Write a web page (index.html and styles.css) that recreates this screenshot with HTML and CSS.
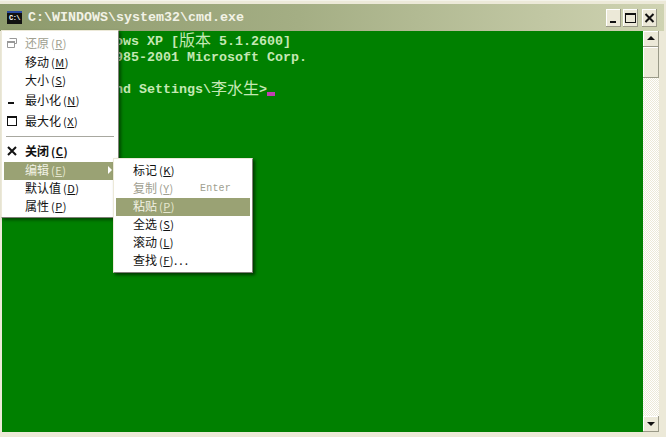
FILE: index.html
```html
<!DOCTYPE html>
<html lang="zh-CN">
<head>
<meta charset="utf-8">
<title>cmd.exe</title>
<link rel="stylesheet" href="styles.css">
</head>
<body>
<div class="window">
  <header class="titlebar">
    <div class="app-icon"><span class="app-icon-text">C:\</span></div>
    <div class="title">C:\WINDOWS\system32\cmd.exe</div>
    <div class="controls">
      <div class="ctl"><svg width="15" height="18" viewBox="0 0 15 18"><rect x="4" y="12" width="6" height="2" fill="#111"/></svg></div>
      <div class="ctl"><svg width="15" height="18" viewBox="0 0 15 18"><rect x="2.5" y="4.5" width="10" height="9" fill="none" stroke="#111"/><rect x="2" y="4" width="11" height="2" fill="#111"/></svg></div>
      <div class="ctl ctl-close"><svg width="15" height="18" viewBox="0 0 15 18"><path d="M3.5 5l8 8M11.5 5l-8 8" stroke="#111" stroke-width="2" fill="none"/></svg></div>
    </div>
  </header>
  <main class="client">
    <div class="console">
      <div class="line">Microsoft Windows XP [<span class="cjk">版本</span> 5.1.2600]</div>
      <div class="line">(C) <span class="cjk">版权所有</span> 1985-2001 Microsoft Corp.</div>
      <div class="line">&nbsp;</div>
      <div class="line">C:\Documents and Settings\<span class="cjk">李水生</span>&gt;<span class="cursor"></span></div>
    </div>
    <div class="scrollbar">
      <div class="sb-btn"><svg width="16" height="16" viewBox="0 0 16 16"><path d="M8 5l4 4H4z" fill="#111"/></svg></div>
      <div class="sb-thumb"></div>
      <div class="sb-track"></div>
      <div class="sb-btn"><svg width="16" height="16" viewBox="0 0 16 16"><path d="M4 6h8l-4 4z" fill="#111"/></svg></div>
    </div>
  </main>

  <nav class="menu menu-system">
    <div class="item h19 disabled"><span class="gutter"><svg width="12" height="12" viewBox="0 0 12 12"><path d="M3.5 1.5h7v5h-2M1.5 4.5h7v6h-7z" fill="none" stroke="#999"/><path d="M1 4h8v2H1z" fill="#999"/></svg></span><span class="label">还原<span class="key">(<u>R</u>)</span></span></div>
    <div class="item h19"><span class="gutter"></span><span class="label">移动<span class="key">(<u>M</u>)</span></span></div>
    <div class="item h18"><span class="gutter"></span><span class="label">大小<span class="key">(<u>S</u>)</span></span></div>
    <div class="item h21"><span class="gutter"><svg width="12" height="12" viewBox="0 0 12 12"><rect x="2" y="8" width="6" height="2" fill="#111"/></svg></span><span class="label">最小化<span class="key">(<u>N</u>)</span></span></div>
    <div class="item h21"><span class="gutter"><svg width="12" height="12" viewBox="0 0 12 12"><rect x="1.5" y="1.5" width="9" height="9" fill="none" stroke="#111"/><rect x="1" y="1" width="10" height="2" fill="#111"/></svg></span><span class="label">最大化<span class="key">(<u>X</u>)</span></span></div>
    <div class="sep"></div>
    <div class="item h20 bold"><span class="gutter"><svg width="12" height="12" viewBox="0 0 12 12"><path d="M2 2l8 8M10 2l-8 8" stroke="#111" stroke-width="2" fill="none"/></svg></span><span class="label">关闭<span class="key">(<u>C</u>)</span></span></div>
    <div class="item h18 active"><span class="gutter"></span><span class="label">编辑<span class="key">(<u>E</u>)</span></span><span class="arrow"></span></div>
    <div class="item h18"><span class="gutter"></span><span class="label">默认值<span class="key">(<u>D</u>)</span></span></div>
    <div class="item h18"><span class="gutter"></span><span class="label">属性<span class="key">(<u>P</u>)</span></span></div>
  </nav>

  <nav class="menu menu-edit">
    <div class="item h18"><span class="gutter"></span><span class="label">标记<span class="key">(<u>K</u>)</span></span></div>
    <div class="item h18 disabled"><span class="gutter"></span><span class="label">复制<span class="key">(<u>Y</u>)</span></span><span class="shortcut">Enter</span></div>
    <div class="item h18 active"><span class="gutter"></span><span class="label">粘贴<span class="key">(<u>P</u>)</span></span></div>
    <div class="item h18"><span class="gutter"></span><span class="label">全选<span class="key">(<u>S</u>)</span></span></div>
    <div class="item h18"><span class="gutter"></span><span class="label">滚动<span class="key">(<u>L</u>)</span></span></div>
    <div class="item h18"><span class="gutter"></span><span class="label">查找<span class="key">(<u>F</u>)</span><span class="dots">...</span></span></div>
  </nav>
</div>
</body>
</html>
```
FILE: styles.css
```css
* { box-sizing: border-box; }
html, body { margin: 0; padding: 0; }
body { background: #ece9d8; overflow: hidden; }

.window {
  position: relative;
  width: 666px;
  height: 437px;
  background: #ece9d8;
  padding: 3px 7px 5px 2px;
  display: flex;
  flex-direction: column;
  border-top: 1px solid #f4f3ea;
}

.titlebar {
  height: 27px;
  margin: 0 -5px 0 -2px;
  padding: 0 7px 0 7px;
  display: flex;
  align-items: center;
  background: linear-gradient(90deg, #8d9a6c 0%, #a4ae84 45%, #cfd3b2 100%);
}
.app-icon {
  width: 15px;
  height: 13px;
  background: #111;
  border-top: 2px solid #2a4aa0;
  display: flex;
  align-items: center;
  justify-content: center;
}
.app-icon-text {
  color: #fff;
  font: bold 7px/9px "Liberation Mono", monospace;
  letter-spacing: -0.5px;
}
.title {
  margin-left: 6px;
  flex: 1;
  color: #f2f2e6;
  font: bold 13.33px/16px "Liberation Mono", "Noto Sans CJK SC", monospace;
}
.controls { display: flex; gap: 2px; }
.ctl {
  width: 15px;
  height: 18px;
  background: #ece9d8;
  box-shadow: inset -1px -1px 0 #9a9a88, inset 1px 1px 0 #fff;
}
.ctl svg { display: block; }
.ctl-close { margin-left: 2px; }

.client { flex: 1; display: flex; min-height: 0; }
.console {
  flex: 1;
  background: #008000;
  padding: 3px 0 0 1px;
  color: #c4e8b4;
  font: bold 13.33px/16px "Liberation Mono", "Noto Sans CJK SC", monospace;
}
.line { height: 16px; white-space: pre; }
.cjk { font: 16px/0 "Noto Sans CJK SC", sans-serif; vertical-align: -1px; }
.cursor {
  display: inline-block;
  width: 8px;
  height: 4px;
  background: #c040b0;
  vertical-align: -3px;
}

.scrollbar {
  width: 16px;
  display: flex;
  flex-direction: column;
  background: repeating-conic-gradient(#fff 0 25%, #ece9d8 0 50%) 0 0 / 2px 2px;
}
.sb-btn, .sb-thumb {
  background: #ece9d8;
  box-shadow: inset -1px -1px 0 #9a9a88, inset 1px 1px 0 #fff;
}
.sb-btn { height: 16px; flex: none; }
.sb-btn svg { display: block; }
.sb-thumb { height: 31px; flex: none; }
.sb-track { flex: 1; }

.menu {
  position: absolute;
  background: #fff;
  border: 1px solid;
  border-color: #ece9d8 #808078 #808078 #ece9d8;
  font: 12px/18px "Noto Sans CJK SC", sans-serif;
  color: #111;
  padding: 3px 2px 2px;
}
.menu-system {
  left: 1px;
  top: 29px;
  width: 118px;
  height: 188px;
  box-shadow: 2px 2px 3px rgba(0, 0, 0, .45);
}
.menu-edit {
  left: 113px;
  top: 157px;
  width: 140px;
  height: 115px;
  box-shadow: 2px 2px 3px rgba(0, 0, 0, .55);
}
.menu-edit .gutter { width: 17px; }

.item { display: flex; align-items: center; position: relative; white-space: pre; padding-bottom: 2px; }
.h18 { height: 18px; }
.h19 { height: 19px; }
.h20 { height: 20px; }
.h21 { height: 21px; }
.gutter {
  width: 21px;
  flex: none;
  display: flex;
  align-items: center;
  padding-left: 2px;
}
.gutter svg { display: block; }
.label { flex: 1; }
.key { margin-left: 2px; font-size: 11px; letter-spacing: .5px; }
.bold { font-weight: 700; }
.disabled { color: #a0a090; }
.active { background: #9aa274; color: #f2f2e6; }
.active .key { color: #e6e8d0; }
.shortcut {
  margin: 2px 19px 0 0;
  font: 10px/18px "Liberation Mono", monospace;
  color: #a0a090;
  letter-spacing: .2px;
}
.dots { letter-spacing: 2px; }
.arrow {
  width: 0;
  height: 0;
  margin-right: 4px;
  border-left: 4px solid #fff;
  border-top: 4px solid transparent;
  border-bottom: 4px solid transparent;
}
.sep {
  height: 1px;
  margin: 4px 2px 5px 2px;
  background: #a8a8a0;
}
```
